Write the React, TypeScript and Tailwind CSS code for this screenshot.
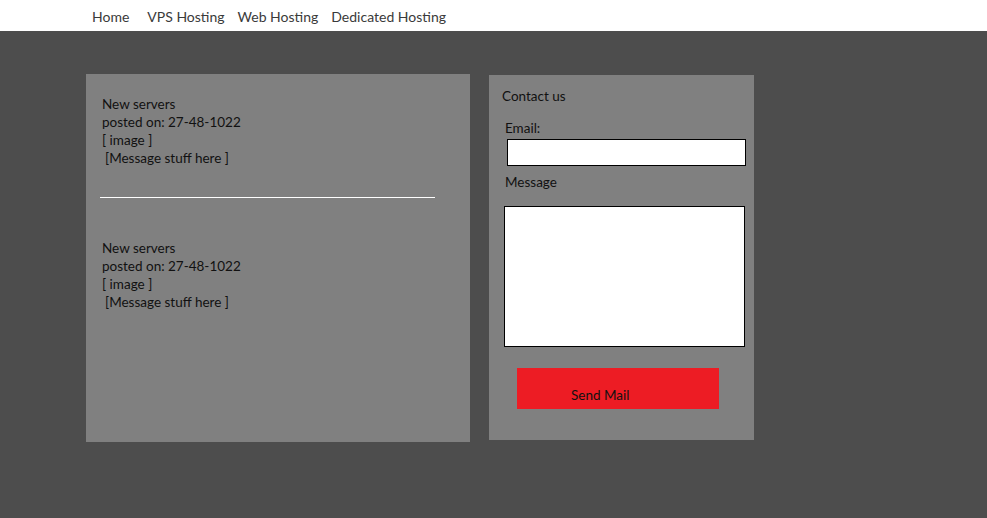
import React from 'react';

const font = { fontFamily: 'Lato, "Open Sans", sans-serif' };

function Post() {
  return (
    <div className="text-[13.5px] leading-[18px] text-[#111]">
      <div>New servers</div>
      <div>posted on: 27-48-1022</div>
      <div>[ image ]</div>
      <div className="pl-[3px]">[Message stuff here ]</div>
    </div>
  );
}

export default function App() {
  return (
    <div style={font} className="min-h-[518px] flex flex-col bg-[#4d4d4d]">
      {/* Top nav */}
      <nav className="h-[31px] bg-white flex items-center pt-[2px] pl-[92px] text-[14px] text-[#3a3a3a]">
        <a>Home</a>
        <a className="ml-[18px]">VPS Hosting</a>
        <a className="ml-[13px]">Web Hosting</a>
        <a className="ml-[13px]">Dedicated Hosting</a>
      </nav>

      <div className="flex items-start pl-[86px] pt-[43px] gap-[19px]">
        {/* News */}
        <div className="w-[384px] h-[368px] bg-[#808080] pt-[21px]">
          <div className="pl-[16px]">
            <Post />
          </div>
          <div className="ml-[14px] mt-[30px] w-[335px] h-px bg-white" />
          <div className="pl-[16px] mt-[41px]">
            <Post />
          </div>
        </div>

        {/* Contact */}
        <div className="mt-px w-[265px] h-[365px] bg-[#808080] pt-[12px] text-[13.5px] leading-[18px] text-[#111]">
          <div className="pl-[13px]">Contact us</div>
          <div className="pl-[16px] mt-[14px]">Email:</div>
          <input className="block ml-[18px] mt-[2px] w-[239px] h-[27px] bg-white border border-black outline-none" />
          <div className="pl-[16px] mt-[7px]">Message</div>
          <textarea className="block ml-[15px] mt-[15px] w-[241px] h-[141px] bg-white border border-black outline-none resize-none" />
          <button className="block ml-[28px] mt-[21px] w-[202px] h-[41px] bg-[#ed1c24] text-left pl-[54px] pt-[12px] text-[#111]">
            Send Mail
          </button>
        </div>
      </div>
    </div>
  );
}
